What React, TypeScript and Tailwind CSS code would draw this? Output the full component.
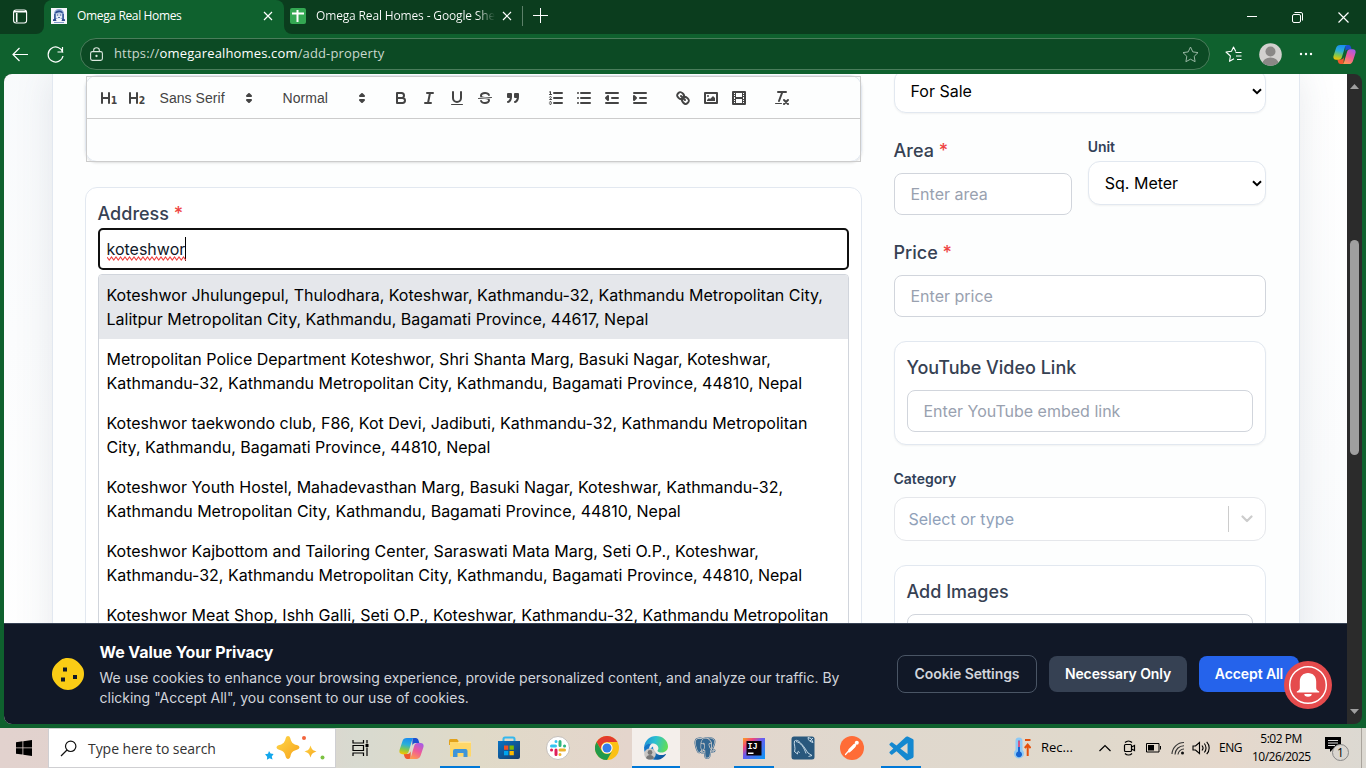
import type { ReactNode } from "react";
import { BiLogoPostgresql, BiLogoVisualStudio } from "react-icons/bi";

const suggestions: string[][] = [
  ["Koteshwor Jhulungepul, Thulodhara, Koteshwar, Kathmandu-32, Kathmandu Metropolitan City,", "Lalitpur Metropolitan City, Kathmandu, Bagamati Province, 44617, Nepal"],
  ["Metropolitan Police Department Koteshwor, Shri Shanta Marg, Basuki Nagar, Koteshwar,", "Kathmandu-32, Kathmandu Metropolitan City, Kathmandu, Bagamati Province, 44810, Nepal"],
  ["Koteshwor taekwondo club, F86, Kot Devi, Jadibuti, Kathmandu-32, Kathmandu Metropolitan", "City, Kathmandu, Bagamati Province, 44810, Nepal"],
  ["Koteshwor Youth Hostel, Mahadevasthan Marg, Basuki Nagar, Koteshwar, Kathmandu-32,", "Kathmandu Metropolitan City, Kathmandu, Bagamati Province, 44810, Nepal"],
  ["Koteshwor Kajbottom and Tailoring Center, Saraswati Mata Marg, Seti O.P., Koteshwar,", "Kathmandu-32, Kathmandu Metropolitan City, Kathmandu, Bagamati Province, 44810, Nepal"],
  ["Koteshwor Meat Shop, Ishh Galli, Seti O.P., Koteshwar, Kathmandu-32, Kathmandu Metropolitan"],
];

/* ---------- Browser chrome ---------- */

function Cross({ className = "" }: { className?: string }) {
  return (
    <svg className={className} width="10" height="10" viewBox="0 0 10 10" stroke="currentColor" strokeWidth="1.2" fill="none">
      <path d="M1 1l8 8M9 1L1 9" />
    </svg>
  );
}

function CopilotLogo({ id, size }: { id: string; size: number }) {
  return (
    <svg width={size} height={size} viewBox="0 0 24 24" className="shrink-0">
      <defs>
        <linearGradient id={`${id}a`} x1="0.5" y1="0" x2="0.3" y2="1">
          <stop offset="0" stopColor="#1a8df0" />
          <stop offset="0.4" stopColor="#2ab0d8" />
          <stop offset="0.7" stopColor="#7fc850" />
          <stop offset="1" stopColor="#f4c400" />
        </linearGradient>
        <linearGradient id={`${id}b`} x1="0.8" y1="0" x2="0.3" y2="1">
          <stop offset="0" stopColor="#a55be8" />
          <stop offset="0.5" stopColor="#ee5a9a" />
          <stop offset="1" stopColor="#ff9a50" />
        </linearGradient>
      </defs>
      <path d="M13 2h3.200c1.300 0 2.100.9 2.500 2.100l.8 2.700h-3.800c-1.500 0-2.500.9-3 2.500z" fill="#1c4fd0" />
      <path d="M11 22H7.800c-1.300 0-2.100-.9-2.500-2.100l-.8-2.700h3.800c1.500 0 2.500-.9 3-2.500z" fill="#f0582e" />
      <path d="M7.500 2h7.300c-1.500 0-2 1.300-2.500 2.800l-3 10c-.5 1.600-1.500 2.600-3.200 2.600H3.200C.8 17.400-.1 15.600.6 13.200l2.600-8C3.900 3 5.300 2 7.500 2z" fill={`url(#${id}a)`} />
      <path d="M16.500 22H9.200c1.500 0 2-1.300 2.500-2.800l3-10c.5-1.600 1.500-2.600 3.200-2.600h2.900c2.400 0 3.300 1.800 2.600 4.200l-2.600 8C20.100 21 18.700 22 16.500 22z" fill={`url(#${id}b)`} />
    </svg>
  );
}

function TitleBar() {
  return (
    <div className="flex h-[34px] shrink-0 bg-[#0b3d1e] text-[12px] text-white">
      <div className="w-11 bg-[#0f612e]">
        <div className="flex h-full items-center rounded-br-[8px] bg-[#0b3d1e] pb-[2px] pl-[13px]">
          <svg width="15" height="15" viewBox="0 0 15 15" fill="none" stroke="#fff" strokeWidth="1.1">
            <rect x="0.600" y="1" width="13" height="13" rx="2.500" />
            <path d="M1 2.800h12M3.700 4v9" strokeWidth="1.600" />
          </svg>
        </div>
      </div>
      <div className="flex w-[240px] items-center rounded-t-[8px] bg-[#0f612e] pb-[2px] pl-[7px] pr-[11px]">
        <svg width="16" height="16" viewBox="0 0 16 16">
          <rect width="16" height="16" fill="#f4f6fa" />
          <path d="M3 11V6c0-3 2-5 5-5s5 2 5 5v5z" fill="#8fa8d4" />
          <path d="M5 5.500h6V9.500L8 12 5 9.500z" fill="#e6ecf6" />
          <path d="M4 5.500c0-4 8-4 8 0-1 0-2-1.500-3.500-1.500S5.500 5.500 4 5.500zM5.800 6.500h1.500v.9H5.800zM8.800 6.500h1.500v.9H8.800zM7 9.300h2v.8H7zM2 11.500l2.500-1.500L5.500 13H2zM14 11.500L11.500 10l-1 3H14zM3.200 6h1.300v4.500H3.200zM11.500 6h1.300v4.500h-1.300z" fill="#2b4a8c" />
          <path d="M3 14h10v1H3z" fill="#7f97c8" />
        </svg>
        <span className="ml-[10px] whitespace-nowrap tracking-[-0.35px]">Omega Real Homes</span>
        <Cross className="ml-auto" />
      </div>
      <div className="bg-[#0f612e]">
        <div className="flex h-full w-[239px] items-center rounded-bl-[8px] bg-[#0b3d1e] pb-[2px] pl-[6px]">
          <svg width="16" height="16" viewBox="0 0 16 16">
            <rect width="16" height="16" rx="2" fill="#34a853" />
            <path d="M2 5.500h12M7.500 2v12" stroke="#fff" strokeWidth="2" />
          </svg>
          <span className="ml-[10px] w-[179px] overflow-hidden whitespace-nowrap bg-linear-to-r from-white from-90% to-transparent bg-clip-text tracking-[-0.15px] text-transparent">
            Omega Real Homes - Google Sheets
          </span>
          <Cross className="ml-[7px]" />
          <div className="ml-[10px] h-5 w-px shrink-0 bg-[#5c8069]" />
        </div>
      </div>
      <div className="flex items-center pb-[3px] pl-[10px]">
        <svg width="15" height="15" viewBox="0 0 15 15" stroke="#fff" strokeWidth="1">
          <path d="M7.500 0v15M0 7.500h15" />
        </svg>
      </div>
      <div className="ml-auto flex items-center gap-[35px] pr-[17px]">
        <svg width="10" height="10" viewBox="0 0 10 10" stroke="#fff"><path d="M0 4.500h10" /></svg>
        <svg width="11" height="11" viewBox="0 0 11 11" stroke="#fff" fill="none">
          <rect x="0.5" y="2.500" width="8" height="8" rx="1.500" />
          <path d="M2.500.5H9A1.500 1.500 0 0 1 10.500 2v6.500" />
        </svg>
        <svg width="11" height="11" viewBox="0 0 11 11" stroke="#fff" strokeWidth="1.200"><path d="M.5.5l10 10M10.500.5l-10 10" /></svg>
      </div>
    </div>
  );
}

function AddressBar() {
  return (
    <div className="flex h-10 shrink-0 items-center bg-[#0f612e] pl-3 pr-[10px] text-white">
      <svg width="17" height="15" viewBox="0 0 17 15" fill="none" stroke="currentColor" strokeWidth="1.200">
        <path d="M16 7.500H1M7.500 1L1 7.500 7.500 14" />
      </svg>
      <svg className="ml-[18px] mr-px" width="17" height="17" viewBox="0 0 17 17" fill="none" stroke="currentColor" strokeWidth="1.200">
        <path d="M15.900 6.600a7.500 7.500 0 1 0 .1 3.400M15.500 1v5h-5" />
      </svg>
      <div className="ml-[15px] flex h-8 w-[1130px] items-center rounded-full border border-[#4a7d5b] bg-[#0c4a24] pl-[9px] pr-[10px]">
        <svg className="-mt-px" width="13" height="14" viewBox="0 0 13 14" fill="none" stroke="#dce8df" strokeWidth="1.100">
          <rect x="0.600" y="4.600" width="11.800" height="8.800" rx="1.800" />
          <path d="M3.700 4.500V3a2.800 2.300 0 0 1 5.600 0v1.500" />
          <circle cx="6.500" cy="9" r="0.600" fill="#dce8df" />
        </svg>
        <span className="ml-[11px] text-[13px] tracking-[0.15px] text-[#c9d8ce]">
          https://<span className="text-white">omegarealhomes.com</span>/add-property
        </span>
        <svg className="ml-auto" width="17" height="17" viewBox="0 0 17 17" fill="none" stroke="#9ab8a4" strokeLinejoin="round">
          <path d="M8.500 1l2.300 4.900 5.200.7-3.800 3.700.9 5.400-4.600-2.500-4.600 2.500.9-5.400L1 6.600l5.200-.7z" />
        </svg>
      </div>
      <svg className="ml-[15px]" width="18" height="16" viewBox="0 0 18 16" fill="none" stroke="#fff" strokeWidth="1.100" strokeLinejoin="round">
        <path d="M9 12.800l-4.500 2.500.9-5.300L1 6l5.500-.7L8.500 1l2.300 4.500M10.500 6.500h6M11 10h5.500M12 13.500h4.500" />
      </svg>
      <svg className="ml-[16px]" width="23" height="23" viewBox="0 0 23 23">
        <defs><clipPath id="ava"><circle cx="11.500" cy="11.500" r="11.200" /></clipPath></defs>
        <circle cx="11.500" cy="11.500" r="11.300" fill="#d2d0ce" />
        <circle cx="11.500" cy="8.500" r="5" fill="#8a8886" />
        <ellipse cx="11.500" cy="20.500" rx="8" ry="6" fill="#8a8886" clipPath="url(#ava)" />
      </svg>
      <svg className="ml-[17px]" width="14" height="4" viewBox="0 0 14 4" fill="#fff">
        <circle cx="2" cy="2" r="1.200" /><circle cx="7" cy="2" r="1.200" /><circle cx="12" cy="2" r="1.200" />
      </svg>
      <div className="ml-auto"><CopilotLogo id="cpTop" size={23} /></div>
    </div>
  );
}

/* ---------- Rich text editor ---------- */

function QIcon({ children }: { children: ReactNode }) {
  return (
    <span className="flex h-6 w-7 items-center justify-center">
      <svg width="18" height="18" viewBox="0 0 18 18" fill="none" stroke="#444" strokeWidth="2" strokeLinecap="round" strokeLinejoin="round">
        {children}
      </svg>
    </span>
  );
}

function Heading({ level }: { level: number }) {
  return (
    <QIcon>
      <path d="M2 4v10M9 4v10M2 9h7" />
      <text x="10.700" y="14.800" fontSize="10.500" fontWeight="700" fill="#444" stroke="none" fontFamily="DejaVu Sans, sans-serif" textLength="6.500" lengthAdjust="spacingAndGlyphs">{level}</text>
    </QIcon>
  );
}

function Picker({ label }: { label: string }) {
  return (
    <span className="mr-[15px] flex h-6 flex-1 items-center justify-between pl-[9px] text-[14px] text-[#444]">
      <span className="whitespace-nowrap font-[Liberation_Sans] tracking-[0.05px]">{label}</span>
      <svg className="-ml-px mr-px" width="18" height="18" viewBox="0 0 18 18" fill="#444" stroke="#444" strokeWidth="2" strokeLinejoin="round">
        <path d="M7 11l2 2 2-2zM7 7l2-2 2 2z" />
      </svg>
    </span>
  );
}

function Editor() {
  return (
    <div className="mt-[1px] h-[87px] rounded-xl border border-slate-200 shadow-sm">
      <div className="h-[86px] border border-[#ccc]">
        <div className="flex h-[42px] items-center border-b border-[#ccc] pl-2 pt-px">
          <Heading level={1} />
          <Heading level={2} />
          <div className="flex w-[123px]"><Picker label="Sans Serif" /></div>
          <div className="flex w-[113px]"><Picker label="Normal" /></div>
          <QIcon><path d="M5 4h4.500a2.500 2.500 0 0 1 0 5H5zM5 9h5.500a2.500 2.500 0 0 1 0 5H5z" /></QIcon>
          <QIcon><path d="M7 4h6M5 14h6M8 14l2-10" /></QIcon>
          <QIcon>
            <path d="M5 3v6a4 4 0 0 0 8 0V3" />
            <rect x="3" y="15" width="12" height="1" rx="0.500" fill="#444" stroke="none" />
          </QIcon>
          <QIcon>
            <path d="M15.500 8.500l-13 1" strokeWidth="1" />
            <path stroke="none" fill="#444" d="M9.007,8C6.542,7.791,6,7.519,6,6.500,6,5.792,7.283,5,9,5c1.571,0,2.765.679,2.969,1.309a1,1,0,0,0,1.900-.617C13.356,4.106,11.354,3,9,3,6.200,3,4,4.538,4,6.500a3.200,3.200,0,0,0,.5,1.843ZM8.984,10C11.457,10.208,12,10.479,12,11.500c0,.708-1.283,1.500-3,1.500-1.571,0-2.765-.679-2.969-1.309a1,1,0,1,0-1.900.617C4.644,13.894,6.646,15,9,15c2.800,0,5-1.538,5-3.500a3.200,3.200,0,0,0-.5-1.843Z" />
          </QIcon>
          <QIcon>
            <path fill="#444" d="M4 5h3v3H4zM11 5h3v3h-3zM7 8c0 4.031-3 5-3 5M14 8c0 4.031-3 5-3 5" />
          </QIcon>
          <span className="w-[15px]" />
          <QIcon>
            <path d="M7 4h8M7 9h8M7 14h8" />
            <path strokeWidth="1" d="M2.500 5.500h2M2.500 3l1-.5v3M4.500 10.500h-2c0-.234 1.850-1.076 1.850-2.234A.959.959 0 0 0 2.500 8.156M2.500 14.846a.959.959 0 0 0 1.850-.109A.7.7 0 0 0 3.750 14a.688.688 0 0 0 .6-.736.959.959 0 0 0-1.850-.109" />
          </QIcon>
          <QIcon><path d="M6 4h9M6 9h9M6 14h9M3 4h0M3 9h0M3 14h0" /></QIcon>
          <QIcon><path d="M3 14h12M3 4h12M9 9h6" /><path d="M5 7v4L3 9z" fill="#444" /></QIcon>
          <QIcon><path d="M3 14h12M3 4h12M9 9h6" /><path d="M3 7v4l2-2z" fill="#444" /></QIcon>
          <span className="w-[15px]" />
          <QIcon>
            <path d="M7 7l4 4M8.900 4.577a3.476 3.476 0 0 1 .36 4.679A3.476 3.476 0 0 1 4.577 8.900C3.185 7.500 2.035 6.400 4.217 4.217S7.500 3.185 8.900 4.577ZM13.423 9.100a3.476 3.476 0 0 0-4.679-.36 3.476 3.476 0 0 0 .36 4.679c1.392 1.392 2.500 2.542 4.679.36S14.815 10.500 13.423 9.100Z" />
          </QIcon>
          <QIcon>
            <rect x="3" y="4" width="12" height="10" />
            <circle cx="6" cy="7" r="1" fill="#444" stroke="none" />
            <path d="M5 12v-1l2-2 1 1 3-3 2 2v3z" fill="#444" stroke="none" />
          </QIcon>
          <QIcon>
            <rect x="3" y="3" width="12" height="12" />
            <path stroke="none" fill="#444" d="M5 3h1v12H5zM12 3h1v12h-1zM5 8h8v2H5zM3 5h3v1H3zM3 7h3v1H3zM3 10h3v1H3zM3 12h3v1H3zM12 5h3v1h-3zM12 7h3v1h-3zM12 10h3v1h-3zM12 12h3v1h-3z" />
          </QIcon>
          <span className="w-[15px]" />
          <QIcon>
            <path d="M5 3h8M6 12L9.350 3M11 11l4 4M15 11l-4 4" />
            <rect x="2" y="14" width="7" height="1" rx="0.500" fill="#444" stroke="none" />
          </QIcon>
        </div>
      </div>
    </div>
  );
}

/* ---------- Property form ---------- */

function Label({ children, required }: { children: ReactNode; required?: boolean }) {
  return (
    <div className="flex h-7 items-center whitespace-pre pb-[2px] text-[18px] font-medium text-gray-700">
      {children}
      {required && <span className="text-[#ef4444]"> *</span>}
    </div>
  );
}

function Field({ text }: { text: string }) {
  return <div className="flex h-[42px] items-center rounded-lg border border-gray-300 bg-white px-4 text-[16px] text-gray-400">{text}</div>;
}

function Select({ text }: { text: string }) {
  return (
    <div className="flex h-[44px] items-center justify-between rounded-xl border border-slate-200 bg-white pl-4 pr-[3px] text-[16px] text-black shadow-xs">
      {text}
      <svg width="10" height="7" viewBox="0 0 10 7" fill="none" stroke="#000" strokeWidth="2"><path d="M1 1.200l4 4 4-4" /></svg>
    </div>
  );
}

function AddressCard() {
  return (
    <div className="mt-[25px] h-[520px] rounded-xl border border-slate-200 bg-white px-3 pt-3">
      <Label required>Address</Label>
      <div className="flex h-[42px] items-center rounded-[5px] border-2 border-[#101010] pl-[7px] text-[16px] text-gray-900">
        <span className="relative flex h-6 items-center border-r border-black">
          koteshwor
          <svg className="absolute left-0 top-[19px]" width="79" height="5" viewBox="0 0 79 5" fill="none" stroke="#f0413f" strokeWidth="1.100">
            <path d={"M0 1" + "l2.250 3l2.250 -3".repeat(18)} />
          </svg>
        </span>
      </div>
      <div className="mt-1 overflow-hidden rounded-t border border-gray-300">
        {suggestions.map((lines, i) => (
          <div key={i} className={`h-16 whitespace-nowrap py-2 pl-2 text-[16px] leading-6 text-black ${i === 0 ? "bg-gray-200" : "bg-white"}`}>
            {lines.map((line) => <div key={line}>{line}</div>)}
          </div>
        ))}
      </div>
    </div>
  );
}

function SideColumn() {
  return (
    <div className="min-w-0">
      <div className="-mt-[5px]"><Select text="For Sale" /></div>
      <div className="mt-6 grid grid-cols-2 gap-4">
        <div>
          <Label required>Area</Label>
          <div className="mt-2"><Field text="Enter area" /></div>
        </div>
        <div>
          <div className="flex h-6 items-center pb-[4px] text-[14px] font-semibold leading-5 tracking-[-0.1px] text-slate-700">Unit</div>
          <Select text="Sq. Meter" />
        </div>
      </div>
      <div className="mt-6"><Label required>Price</Label></div>
      <div className="mt-2"><Field text="Enter price" /></div>
      <div className="mt-6 h-[104px] rounded-xl border border-slate-200 bg-white p-3 shadow-xs">
        <Label>YouTube Video Link</Label>
        <div className="mt-2"><Field text="Enter YouTube embed link" /></div>
      </div>
      <div className="mt-6 flex h-5 items-center pb-[2px] text-[14px] font-semibold text-slate-700">Category</div>
      <div className="mt-2 flex h-[44px] items-center rounded-xl border border-gray-200 bg-white pl-[14px] text-[16px] text-slate-400">
        Select or type
        <div className="ml-auto h-[26px] w-px bg-[#ccc]" />
        <div className="flex w-9 items-center justify-center">
          <svg width="12" height="8" viewBox="0 0 12 8" fill="none" stroke="#ccc" strokeWidth="2.200" strokeLinecap="round" strokeLinejoin="round"><path d="M1.500 1.500L6 6l4.500-4.500" /></svg>
        </div>
      </div>
      <div className="mt-6 h-[140px] rounded-xl border border-slate-200 bg-white p-3">
        <Label>Add Images</Label>
        <div className="mt-2"><Field text="" /></div>
      </div>
    </div>
  );
}

function CookieBanner() {
  return (
    <div className="flex h-[101px] shrink-0 items-center border-t border-gray-700 bg-[#111827] pl-12 pr-12">
      <svg width="32" height="32" viewBox="0 0 32 32">
        <path d="M16 0c3 0 5 .7 7.500 2.200S28 6 29.800 8.500 32 13 32 16s-.7 5-2.200 7.500-3.800 4.700-6.300 6.300S19 32 16 32s-5-.7-7.500-2.200-4.700-3.800-6.300-6.300S0 19 0 16s.7-5 2.200-7.500S6 4 8.500 2.200 13 0 16 0z" fill="#facc15" />
        <path d="M11 9.500h4v4h-4zM21 17h4v4h-4zM9 19.500h4v4H9z" fill="#111827" />
      </svg>
      <div className="ml-[15.5px]">
        <div className="text-[16px] font-bold leading-6 tracking-[-0.1px] text-white">We Value Your Privacy</div>
        <div className="mt-[4px] whitespace-nowrap text-[14px] leading-5 text-gray-300">
          <div>We use cookies to enhance your browsing experience, provide personalized content, and analyze our traffic. By</div>
          <div>clicking "Accept All", you consent to our use of cookies.</div>
        </div>
      </div>
      <div className="ml-auto flex items-center gap-3 whitespace-nowrap text-[14px] font-semibold tracking-[-0.1px]">
        <div className="flex h-[38px] w-[140px] items-center justify-center rounded-lg border border-gray-600 pb-[2px] text-gray-300">Cookie Settings</div>
        <div className="flex h-9 w-[138px] items-center justify-center rounded-lg bg-gray-700 pb-[2px] text-white">Necessary Only</div>
        <div className="relative flex h-9 w-[100px] items-center justify-center rounded-lg bg-[#2563eb] pb-[2px] text-white">
          Accept All
          <svg className="absolute left-[85px] top-[5px]" width="48" height="48" viewBox="0 0 48 48">
            <circle cx="24" cy="24" r="24" fill="#e54b4d" />
            <circle cx="24" cy="24" r="18.300" fill="none" stroke="#fff" strokeWidth="1.500" />
            <path d="M24 12c5 0 8.200 3.500 8.200 8.500V27c0 1.500 1 2.500 3 3.500v.9H12.800v-.9c2-1 3-2 3-3.500v-6.500c0-5 3.200-8.500 8.200-8.500zM20.300 33h7.400a3.700 2.800 0 0 1-7.400 0z" fill="#fff" />
          </svg>
        </div>
      </div>
    </div>
  );
}

function Page() {
  return (
    <div className="flex min-h-0 flex-1 bg-[#0f612e] px-1 pb-1">
      <div className="flex min-h-0 flex-1 overflow-hidden rounded-[8px] bg-[#2b2b2b]">
        <div className="flex w-[1343px] flex-col bg-linear-to-br from-slate-50 via-white to-slate-50 font-['Inter','Liberation_Sans',sans-serif]">
          <div className="min-h-0 flex-1 overflow-hidden px-12">
            <div className="grid h-[900px] w-[1248px] grid-cols-3 gap-8 border-x border-slate-200 bg-[#fdfefe] pl-[31.5px] pr-[33px] shadow-[0_0_36px_rgba(71,85,105,0.13)]">
              <div className="col-span-2 min-w-0">
                <Editor />
                <AddressCard />
              </div>
              <SideColumn />
            </div>
          </div>
          <CookieBanner />
        </div>
        <div className="flex w-[15px] flex-col items-center pt-[10px] pb-[10px]">
          <svg width="9" height="5" viewBox="0 0 9 5" fill="#9f9f9f"><path d="M0 5L4.500 0 9 5z" /></svg>
          <div className="mt-[151px] h-[215px] w-[9px] rounded-full bg-[#9f9f9f]" />
          <svg className="mt-auto" width="9" height="5" viewBox="0 0 9 5" fill="#9f9f9f"><path d="M0 0l4.500 5L9 0z" /></svg>
        </div>
      </div>
    </div>
  );
}

/* ---------- Taskbar ---------- */

function EdgeLogo() {
  return (
    <svg width="24" height="24" viewBox="0 0 24 24">
      <defs>
        <linearGradient id="edgeTop" x1="0" y1="0.300" x2="1" y2="0.500">
          <stop offset="0" stopColor="#1f93d8" /><stop offset="0.450" stopColor="#2cc0d0" /><stop offset="1" stopColor="#62dd55" />
        </linearGradient>
        <linearGradient id="edgeLow" x1="0" y1="0" x2="0.800" y2="1">
          <stop offset="0" stopColor="#1b8fdc" /><stop offset="1" stopColor="#0c4f96" />
        </linearGradient>
      </defs>
      <path d="M.1 11C.8 4.500 5.800 0 12 0c7 0 12 5 12 10.500 0 3.500-2.800 6-6.300 6-2.500 0-4.200-.8-4.200-1.800 0-.6.900-1 .9-2.500 0-2.700-2.700-4.700-6-4.700C4.500 7.500 1.300 8.800.1 11z" fill="url(#edgeTop)" />
      <path d="M.1 11C1 8.500 4.500 7 8 7.500c-2 1-3 3.500-3 6 0 4.500 3 8.500 7.500 10.400C5 24.300-.5 18.500.1 11z" fill="#1376c8" />
      <path d="M9 10.500c-2 1-3.200 3-3 5.500.4 4.500 4 7.800 8 7.800 3.200-.5 6-2.300 7.800-5 .3-.5-.2-.9-.7-.6-5.500 2.500-12-.5-12.100-7.700z" fill="url(#edgeLow)" />
      <g transform="translate(0 12)">
        <circle cx="6" cy="6" r="5.800" fill="#c9c7c5" /><circle cx="6" cy="4.500" r="2.400" fill="#777" /><path d="M2 10c1-4 7-4 8 0-2 2-6 2-8 0z" fill="#777" />
      </g>
    </svg>
  );
}

function Task({ children, state }: { children: ReactNode; state?: "open" | "active" }) {
  return (
    <div className={`flex h-10 w-12 flex-col items-center ${state === "active" ? "bg-[#f4efeb]" : ""}`}>
      <div className="flex h-[38px] items-center pt-[2px]">{children}</div>
      {state && <div className={`h-[2px] bg-[#0078d7] ${state === "active" ? "w-12" : "w-10"}`} />}
    </div>
  );
}

function TaskBar() {
  return (
    <div className="flex h-10 shrink-0 items-center bg-[linear-gradient(90deg,#e2d2ce_0%,#e0d2cc_20%,#d8dad0_26%,#e0dac8_35%,#e4d5cc_46%,#e0d8ce_62%,#e0d9cc_80%,#e5d8cc_90%,#dcd9d2_100%)] font-['Open_Sans',sans-serif] text-black">
      <div className="flex w-12 justify-center">
        <svg width="16" height="16" viewBox="0 0 16 16"><path d="M0 2.200L6.500 1.300v6.200H0zM7.300 1.200L16 0v7.500H7.300zM0 8.300h6.500v6.300L0 13.700zM7.300 8.300H16V16l-8.700-1.200z" /></svg>
      </div>
      <div className="flex h-10 w-[288px] items-center border border-[#cfcfd2] bg-white pl-[11px]">
        <svg width="18" height="17" viewBox="0 0 18 17" fill="none" stroke="#111" strokeWidth="1.200"><circle cx="10.700" cy="6.300" r="5.200" /><path d="M7 10L1 16" /></svg>
        <span className="ml-[10px] text-[14px] tracking-[-0.05px] text-[#333]">Type here to search</span>
        <svg className="ml-auto mr-[9px]" width="62" height="26" viewBox="0 0 62 26">
          <defs><linearGradient id="spark" x1="0" y1="0" x2="1" y2="1"><stop offset="0" stopColor="#ffd84a" /><stop offset="1" stopColor="#f6a21a" /></linearGradient></defs>
          <path d="M24 1c1 0 2 .8 2.400 2.500 1 4 2.400 5.500 6.500 6.600 3.400.9 3.400 3.800 0 4.700-4.100 1.100-5.500 2.600-6.500 6.600-.8 3.300-4 3.300-4.800 0-1-4-2.400-5.500-6.500-6.600-3.400-.9-3.400-3.800 0-4.700 4.100-1.100 5.500-2.600 6.500-6.600C22 1.800 23 1 24 1z" fill="url(#spark)" />
          <path d="M46.500 10.500c1.300 4 2 4.800 6 6-4 1.300-4.700 2-6 6-1.200-4-2-4.700-6-6 4-1.200 4.800-2 6-6z" fill="url(#spark)" />
          <path d="M5 16l1.600 2.600 3 .3-1.800 2.500.7 3-2.900-1.100-2.700 1.400.3-3L1 19.300l3-.6z" fill="#13a7ec" />
          <circle cx="40" cy="3" r="2" fill="#f2643c" /><circle cx="58.500" cy="22.500" r="2" fill="#7cc142" />
        </svg>
      </div>
      <div className="flex w-12 justify-center">
        <svg width="17" height="16" viewBox="0 0 17 16" fill="none" stroke="#000" strokeWidth="1.200"><path d="M1 0v3h10.500V0M1 16v-3h10.500v3M1 5.500h10.500v5H1zM15 0v3.500M15 7.500V16" /><path d="M13.500 4h3v3h-3z" fill="#000" stroke="none" /></svg>
      </div>
      <div className="ml-[3px] flex gap-px">
        <Task><CopilotLogo id="cpTask" size={25} /></Task>
        <Task state="open">
          <svg width="22" height="20" viewBox="0 0 22 20">
            <path d="M0 2.500A1.500 1.500 0 0 1 1.500 1H8l2 2.500V7H0z" fill="#e2a21a" />
            <path d="M1 4h21v14.500H1z" fill="#ffd768" /><path d="M9 3.500h13V5H9z" fill="#ffe498" />
            <path d="M4 19v-6a2 2 0 0 1 2-2h10.500a2 2 0 0 1 2 2v6h-4v-4h-6v4z" fill="#3f95d8" />
          </svg>
        </Task>
        <Task>
          <svg width="24" height="24" viewBox="0 0 24 24">
            <defs><linearGradient id="store" x1="0" y1="0" x2="1" y2="1"><stop offset="0" stopColor="#0873c4" /><stop offset="1" stopColor="#173a68" /></linearGradient></defs>
            <path d="M6.500 7V3A1.500 1.500 0 0 1 8 1.500h8A1.500 1.500 0 0 1 17.500 3v4" fill="none" stroke="#35b8ee" strokeWidth="2" />
            <path d="M1 5h22v16a2 2 0 0 1-2 2H3a2 2 0 0 1-2-2z" fill="url(#store)" />
            <path d="M7 9.500h4.300v4.300H7z" fill="#f25022" /><path d="M12.500 9.500h4.300v4.300h-4.300z" fill="#7fba00" /><path d="M7 15h4.300v4.300H7z" fill="#00a4ef" /><path d="M12.500 15h4.300v4.300h-4.300z" fill="#ffb900" />
          </svg>
        </Task>
        <Task>
          <svg width="24" height="24" viewBox="0 0 24 24" fill="none" strokeWidth="3" strokeLinecap="round">
            <circle cx="12" cy="12" r="11.500" fill="#fff" stroke="#b9b4b0" strokeWidth="0.800" />
            <path d="M5.500 10h4M10 5.400v.1" stroke="#36c5f0" /><path d="M14 5.500v4M18.500 10h.1" stroke="#2eb67d" /><path d="M14 14h4.500M14 18.400v.1" stroke="#ecb22e" /><path d="M10 14v4.500M5.500 14h.1" stroke="#e01e5a" />
          </svg>
        </Task>
        <Task>
          <svg width="24" height="24" viewBox="0 0 24 24">
            <circle cx="12" cy="12" r="12" fill="#fbc116" />
            <path d="M1.600 6A12 12 0 0 1 22.400 6H12a6 6 0 0 0-5.200 9z" fill="#e33b2e" />
            <path d="M1.600 6A12 12 0 0 0 12 24l5.200-9a6 6 0 0 1-10.400 0z" fill="#229a4a" />
            <circle cx="12" cy="12" r="5.600" fill="#fff" /><circle cx="12" cy="12" r="4.500" fill="#347de8" />
          </svg>
        </Task>
        <Task state="active"><EdgeLogo /></Task>
        <Task><BiLogoPostgresql size={26} className="text-[#336791]" /></Task>
        <Task state="open">
          <svg width="22" height="22" viewBox="0 0 22 22">
            <defs><linearGradient id="ij" x1="0" y1="0" x2="1" y2="1"><stop offset="0" stopColor="#fca01d" /><stop offset="0.250" stopColor="#f0457a" /><stop offset="0.450" stopColor="#6a5cf0" /><stop offset="1" stopColor="#0799f5" /></linearGradient></defs>
            <path d="M0 1h22v21H0z" fill="url(#ij)" /><path d="M3.500 4h15v14.500h-15z" fill="#0b0208" />
            <text x="4.500" y="11.500" fontSize="8.500" fontWeight="700" fill="#fff" fontFamily="Liberation Mono, monospace">IJ</text>
            <path d="M5 15.500h5.500V17H5z" fill="#fff" />
          </svg>
        </Task>
        <Task>
          <svg width="24" height="24" viewBox="0 0 24 24">
            <rect x="0.500" y="0.500" width="23" height="23" rx="2.500" fill="#29587d" />
            <path d="M3.500 16C5 11 2.500 9 3.500 5c3-2 5 1 7 3 3 3 5 7 6.500 9l4 2.500-3.500 1M4 16l2.500 2c0-3 1-3.500 2-1M5 5.500c5 1 8 6 10 12M17 1.500c0 3 2 4 5 5l-2-4zM22 2l-3 3" fill="none" stroke="#d3e4ef" strokeWidth="0.900" />
          </svg>
        </Task>
        <Task>
          <svg width="24" height="24" viewBox="0 0 24 24" fill="none" stroke="#fff" strokeLinecap="round">
            <circle cx="12" cy="12" r="12" fill="#ff6c37" stroke="none" />
            <circle cx="16.800" cy="6.800" r="2" fill="#fff" stroke="none" /><path d="M14.800 9l-5 5" strokeWidth="3" /><path d="M9.500 14l-4 4.500M15 10.500L11.500 14l-2.500 2" strokeWidth="1.200" />
          </svg>
        </Task>
        <Task state="open"><BiLogoVisualStudio size={29} className="text-[#1488d0]" /></Task>
      </div>
      <div className="ml-auto flex items-center">
        <svg width="18" height="22" viewBox="0 0 18 22">
          <path d="M2.500 4a3.500 3.500 0 0 1 7 0v9a5 5 0 1 1-7 0z" fill="#8ec9f5" /><path d="M5 4.500a1 1 0 0 1 2 0v10a3 3 0 1 1-2 0z" fill="#1764d1" /><path d="M5 4.500a1 1 0 0 1 2 0V10H5z" fill="#d55685" />
          <path d="M12 3h5.500M14.700 19V8M11.800 11l2.900-3.500 2.900 3.500" stroke="#e5500b" strokeWidth="2" fill="none" />
        </svg>
        <span className="ml-[10px] w-[58px] text-[13px]">Rec...</span>
        <svg width="12" height="8" viewBox="0 0 12 8" fill="none" stroke="#000" strokeWidth="1.200"><path d="M.5 7L6 1.500 11.500 7" /></svg>
        <svg className="ml-[12px]" width="13" height="16" viewBox="0 0 13 16" fill="none" stroke="#000" strokeWidth="1.200"><rect x="1.500" y="4.500" width="7" height="7" rx="1" /><path d="M8.500 7l3-1.500v5l-3-1.500M2 2.500c2-2 5-2 7 0M2 13.500c2 2 5 2 7 0" /></svg>
        <svg className="ml-[10px]" width="15" height="10" viewBox="0 0 15 10" fill="none" stroke="#000"><path d="M.5.500h12.500v8.500H.500zM14.500 3v3.500" /><path d="M2 2h6v5.500H2z" fill="#000" stroke="none" /></svg>
        <svg className="ml-[10px]" width="14" height="14" viewBox="0 0 14 14" fill="none" stroke="#333" strokeWidth="1.100"><path d="M1 13A12 12 0 0 1 13 1.500M4 13.500A9 9 0 0 1 13 4.700M7 13.500A6 6 0 0 1 13 8" /><circle cx="11.500" cy="12" r="1.500" fill="#111" stroke="none" /></svg>
        <svg className="ml-[7px]" width="18" height="14" viewBox="0 0 18 14" fill="none" stroke="#000" strokeWidth="1.100"><path d="M1 5v4h2.500L7.500 12.500v-11L3.500 5zM10 4.500c1.300 1.500 1.300 3.500 0 5M12.300 2.500c2.300 2.500 2.300 6.500 0 9M14.700.8c3.300 3.500 3.300 9 0 12.400" /></svg>
        <span className="ml-[9px] w-[33px] text-[12px] tracking-[-0.5px]">ENG</span>
        <div className="w-[58px] whitespace-nowrap text-center text-[12px] leading-[18px] tracking-[-0.5px]">
          <div>5:02 PM</div>
          <div>10/26/2025</div>
        </div>
        <span className="relative ml-[15px] mr-[12px] block h-[22px] w-[24px]">
          <svg width="16" height="15" viewBox="0 0 16 15"><path d="M0 0h16v12H8l-3 3v-3H0z" fill="#000" /><path d="M3 3.500h10M3 6h10M3 8.500h7" stroke="#ddd" /></svg>
          <span className="absolute left-[7px] top-[7px] flex h-[17px] w-[17px] items-center justify-center rounded-full border border-[#888] bg-[#d9d5cf] text-[12px] leading-none">1</span>
        </span>
        <div className="h-10 w-[5px] border-l border-[#a9a49d]" />
      </div>
    </div>
  );
}

export default function App() {
  return (
    <div className="flex h-screen w-[1366px] flex-col overflow-hidden font-['Open_Sans',sans-serif]">
      <TitleBar />
      <AddressBar />
      <Page />
      <TaskBar />
    </div>
  );
}
